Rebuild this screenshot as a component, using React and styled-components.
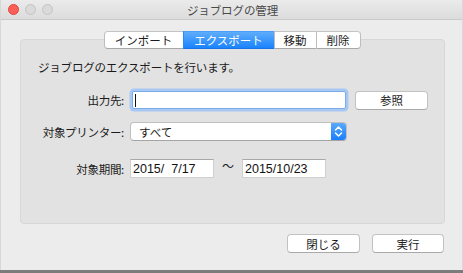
import styled, { createGlobalStyle } from "styled-components"

const GlobalStyle = createGlobalStyle`
  html, body {
    margin: 0;
    padding: 0;
    background: #7c7c7c;
  }
  body {
    font-family: "Noto Sans CJK JP", "Liberation Sans", sans-serif;
    -webkit-font-smoothing: antialiased;
  }
`

const tabs = ["インポート", "エクスポート", "移動", "削除"]

const App = () => {
    return (
        <>
            <GlobalStyle />
            <Window>
                <TitleBar>
                    <Lights>
                        <Light $color="#fc5f57" $border="#df4640" />
                        <Light $color="#dadada" $border="#c4c4c4" />
                        <Light $color="#dadada" $border="#c4c4c4" />
                    </Lights>
                    <Title>ジョブログの管理</Title>
                </TitleBar>
                <Body>
                    <Tabs>
                        {tabs.map((t, i) => (
                            <Tab key={t} $active={i === 1} $w={[79, 91, 42, 45][i]}>
                                {t}
                            </Tab>
                        ))}
                    </Tabs>
                    <Panel>
                        <Description>ジョブログのエクスポートを行います。</Description>
                        <Row $mt={13} $h={24}>
                            <Label>出力先:</Label>
                            <TextField>
                                <Caret />
                            </TextField>
                            <Button $w={73} $ml={9}>参照</Button>
                        </Row>
                        <Row $mt={8} $h={23}>
                            <Label>対象プリンター:</Label>
                            <Select>
                                <SelectValue>すべて</SelectValue>
                                <SelectArrow>
                                    <svg width="9" height="13" viewBox="0 0 9 13">
                                        <path d="M1.5 5 L4.5 2 L7.5 5 M1.5 8 L4.5 11 L7.5 8" fill="none" stroke="#fff" strokeWidth="1.5" strokeLinecap="round" strokeLinejoin="round" />
                                    </svg>
                                </SelectArrow>
                            </Select>
                        </Row>
                        <Row $mt={14} $h={23}>
                            <Label>対象期間:</Label>
                            <DateField>2015/&nbsp;&nbsp;7/17</DateField>
                            <Tilde>〜</Tilde>
                            <DateField>2015/10/23</DateField>
                        </Row>
                    </Panel>
                    <Footer>
                        <Button $w={73}>閉じる</Button>
                        <Button $w={72} $ml={12}>実行</Button>
                    </Footer>
                </Body>
            </Window>
        </>
    )
}

const Window = styled.div`
    width: 463px;
    height: 270px;
    background: #ececec;
    display: flex;
    flex-direction: column;
    box-sizing: border-box;
    border-left: 1px solid #d8d8d8;
    border-right: 1px solid #d8d8d8;
`

const TitleBar = styled.div`
    height: 19px;
    flex: none;
    position: relative;
    display: flex;
    align-items: center;
    justify-content: center;
    background: linear-gradient(#ebebeb, #dcdcdc);
    border-bottom: 1px solid #c9c9c9;
`

const Lights = styled.div`
    position: absolute;
    left: 7px;
    top: 4px;
    display: flex;
    gap: 6px;
`

const Light = styled.span`
    width: 11px;
    height: 11px;
    border-radius: 50%;
    background: ${(p) => p.$color};
    border: 0.5px solid ${(p) => p.$border};
    box-sizing: border-box;
`

const Title = styled.div`
    font-size: 11.5px;
    color: #4a4a4a;
    letter-spacing: -0.1px;
    margin-left: 2px;
`

const Body = styled.div`
    flex: 1;
    display: flex;
    flex-direction: column;
    padding: 11px 17px 0 19px;
`

const Tabs = styled.div`
    display: flex;
    justify-content: center;
    position: relative;
    z-index: 1;
    margin-bottom: -10px;
    margin-left: -1px;
`

const Tab = styled.div`
    width: ${(p) => p.$w}px;
    height: 18px;
    box-sizing: border-box;
    display: flex;
    align-items: center;
    justify-content: center;
    font-size: 11.5px;
    color: ${(p) => (p.$active ? "#fff" : "#1a1a1a")};
    background: ${(p) => (p.$active ? "linear-gradient(#5fadfb, #1a84fd)" : "#fff")};
    border-top: 1px solid ${(p) => (p.$active ? "#4aa0f8" : "#c4c4c4")};
    border-bottom: 1px solid ${(p) => (p.$active ? "#1474e8" : "#a8a8a8")};
    border-left: 1px solid ${(p) => (p.$active ? "#2a8af8" : "#bdbdbd")};
    &:first-child {
        border-radius: 4px 0 0 4px;
    }
    &:last-child {
        border-radius: 0 4px 4px 0;
        border-right: 1px solid #bdbdbd;
    }
`

const Panel = styled.div`
    height: 185px;
    box-sizing: border-box;
    background: #e2e2e2;
    border: 1px solid #d7d7d7;
    border-radius: 4px;
    padding: 19px 0 0 17px;
`

const Description = styled.div`
    font-size: 11.5px;
    line-height: 16px;
    color: #1a1a1a;
    letter-spacing: -0.2px;
`

const Row = styled.div`
    display: flex;
    align-items: center;
    height: ${(p) => p.$h}px;
    margin-top: ${(p) => p.$mt}px;
`

const Label = styled.div`
    width: 86px;
    margin-right: 6px;
    flex: none;
    text-align: right;
    font-size: 11.5px;
    color: #1a1a1a;
    letter-spacing: -0.3px;
    white-space: nowrap;
`

const TextField = styled.div`
    width: 214px;
    height: 18px;
    margin-left: 2px;
    box-sizing: border-box;
    background: #fff;
    border: 1px solid #7eaae8;
    box-shadow: 0 0 0 2.5px #a7c8f3;
    border-radius: 2px;
    display: flex;
    align-items: center;
    padding-left: 2px;
`

const Caret = styled.span`
    width: 1px;
    height: 13px;
    background: #111;
`

const Button = styled.div`
    width: ${(p) => p.$w}px;
    margin-left: ${(p) => p.$ml || 0}px;
    height: 19px;
    box-sizing: border-box;
    background: #fff;
    border: 1px solid #c2c2c2;
    border-bottom-color: #a9a9a9;
    border-radius: 4px;
    display: flex;
    align-items: center;
    justify-content: center;
    font-size: 11.5px;
    color: #1a1a1a;
`

const Select = styled.div`
    width: 217px;
    height: 19px;
    box-sizing: border-box;
    background: #fff;
    border: 1px solid #c0c0c0;
    border-bottom-color: #a5a5a5;
    border-radius: 4px;
    display: flex;
    overflow: hidden;
`

const SelectValue = styled.div`
    flex: 1;
    display: flex;
    align-items: center;
    padding-left: 8px;
    font-size: 11.5px;
    color: #1a1a1a;
`

const SelectArrow = styled.div`
    width: 15px;
    display: flex;
    align-items: center;
    justify-content: center;
    background: linear-gradient(#5aa9fb, #1a7ffc);
`

const DateField = styled.div`
    width: 84px;
    height: 19px;
    box-sizing: border-box;
    background: #fff;
    border: 1px solid #d0d0d0;
    border-top-color: #a8a8a8;
    display: flex;
    align-items: center;
    padding-left: 2px;
    font-family: "Liberation Sans", "Noto Sans CJK JP", sans-serif;
    font-size: 12.5px;
    color: #111;
    &:first-of-type {
        margin-left: 1px;
    }
`

const Tilde = styled.div`
    width: 28px;
    text-align: center;
    font-size: 12px;
    color: #222;
    margin-top: -6px;
`

const Footer = styled.div`
    display: flex;
    justify-content: flex-end;
    padding-top: 10px;
    margin-right: 1px;
`

export default App
